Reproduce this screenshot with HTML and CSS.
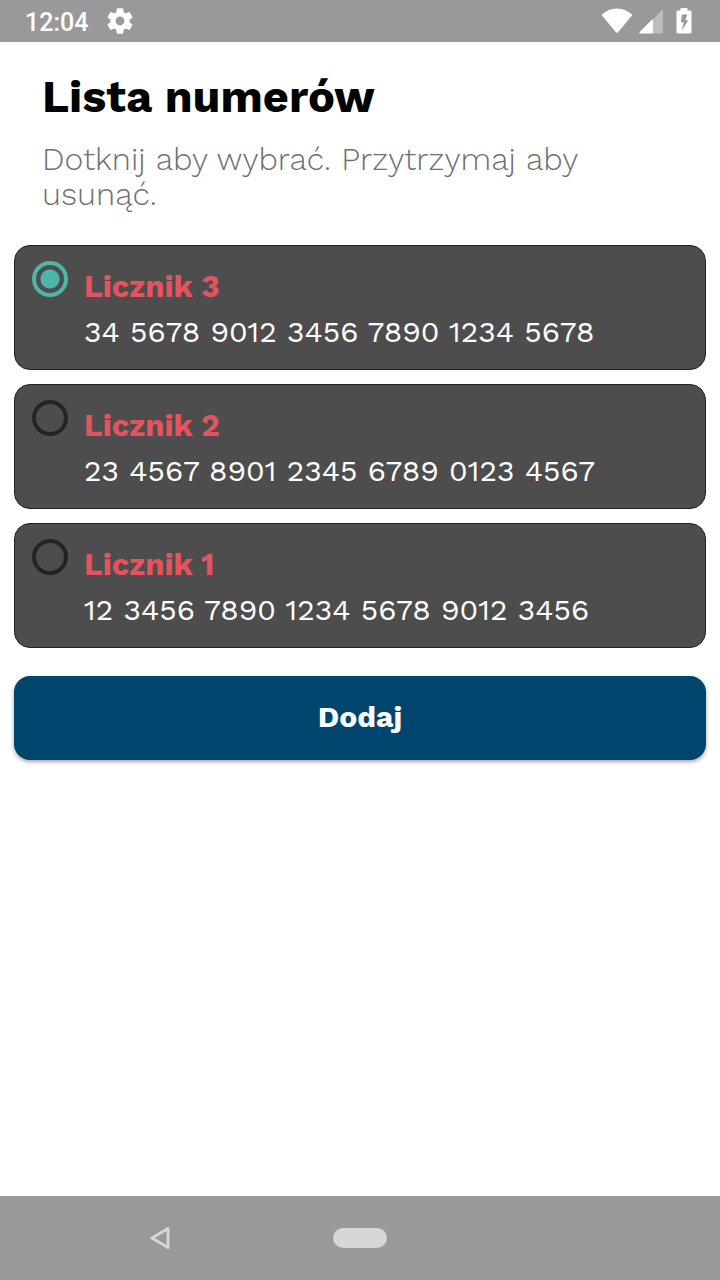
FILE: index.html
```html
<!DOCTYPE html>
<html lang="pl">
<head>
<meta charset="utf-8">
<meta name="viewport" content="width=device-width, initial-scale=1">
<title>Lista numerów</title>
<link rel="stylesheet" href="styles.css">
</head>
<body>
<div class="screen">
  <header class="status">
    <span class="clock">12:04</span>
    <svg class="gear" viewBox="0 0 24 24" aria-hidden="true"><path fill="#fff" d="M19.14 12.94c.04-.3.06-.61.06-.94 0-.32-.02-.64-.07-.94l2.03-1.58c.18-.14.23-.41.12-.61l-1.92-3.32c-.12-.22-.37-.29-.59-.22l-2.39.96c-.5-.38-1.03-.7-1.62-.94l-.36-2.54c-.04-.24-.24-.41-.48-.41h-3.84c-.24 0-.43.17-.47.41l-.36 2.54c-.59.24-1.13.57-1.62.94l-2.39-.96c-.22-.08-.47 0-.59.22L2.74 8.87c-.12.21-.08.47.12.61l2.03 1.58c-.05.3-.09.63-.09.94s.02.64.07.94l-2.03 1.58c-.18.14-.23.41-.12.61l1.92 3.32c.12.22.37.29.59.22l2.39-.96c.5.38 1.03.7 1.62.94l.36 2.54c.05.24.24.41.48.41h3.84c.24 0 .44-.17.47-.41l.36-2.54c.59-.24 1.13-.56 1.62-.94l2.39.96c.22.08.47 0 .59-.22l1.92-3.32c.12-.22.07-.47-.12-.61l-2.01-1.58zM12 15.3c-1.800 0-3.300-1.500-3.300-3.300s1.500-3.300 3.300-3.300 3.300 1.500 3.300 3.300-1.500 3.300-3.300 3.300z"/></svg>
    <div class="indicators">
      <svg class="wifi" viewBox="0 0 32 26" aria-hidden="true"><path fill="#fff" d="M1 6.500Q7.500 .5 16 .5T31 6.500Q31.500 7 31 7.600L16.800 24.600Q16 25.400 15.200 24.600L1 7.600Q.5 7 1 6.500Z"/></svg>
      <svg class="signal" viewBox="0 0 24 26" aria-hidden="true"><path fill="#bdbdbd" d="M14 11.500 22.500 2.500Q24 1.200 24 3V24Q24 25.500 22.500 25.500H14Z"/><path fill="#fff" d="M14 10.800V25.500H1.500Q-.5 25.300.8 23.800Z"/></svg>
      <svg class="battery" viewBox="0 0 16 26" aria-hidden="true"><path fill="#fff" fill-rule="evenodd" d="M4.500 0H11.500V2.500H14Q15.500 2.500 15.500 4V24Q15.500 25.500 14 25.500H2Q.5 25.500.5 24V4Q.5 2.500 2 2.500H4.500ZM6 6.500 4.800 14.200H7.500L6 22.300 12.300 12.200H9.500L11.200 6.500Z"/></svg>
    </div>
  </header>
  <main class="content">
    <div class="intro">
      <h1 class="title">Lista numerów</h1>
      <p class="hint">Dotknij aby wybrać. Przytrzymaj aby usunąć.</p>
    </div>
    <div class="list" role="radiogroup" aria-label="Lista numerów">
      <label class="card" for="n3">
        <input class="radio" type="radio" name="numer" id="n3" checked>
        <span class="text"><span class="name">Licznik 3</span><span class="number">34 5678 9012 3456 7890 1234 5678</span></span>
      </label>
      <label class="card" for="n2">
        <input class="radio" type="radio" name="numer" id="n2">
        <span class="text"><span class="name">Licznik 2</span><span class="number">23 4567 8901 2345 6789 0123 4567</span></span>
      </label>
      <label class="card" for="n1">
        <input class="radio" type="radio" name="numer" id="n1">
        <span class="text"><span class="name">Licznik 1</span><span class="number">12 3456 7890 1234 5678 9012 3456</span></span>
      </label>
    </div>
    <button class="add" type="button">Dodaj</button>
  </main>
  <nav class="navbar" aria-label="System">
    <button class="nav-button" type="button" aria-label="Wstecz"><svg class="back" viewBox="0 0 20 24" aria-hidden="true"><path fill="none" stroke="#d6d6d6" stroke-width="3" stroke-linejoin="round" d="M18 2.500V21.500L2 12Z"/></svg></button>
    <button class="nav-button" type="button" aria-label="Ekran główny"><span class="pill"></span></button>
    <span></span>
  </nav>
</div>
</body>
</html>
```
FILE: styles.css
```css
* {
  box-sizing: border-box;
}

body {
  margin: 0;
  background: #fff;
  font-family: "Work Sans", Inter, "Liberation Sans", sans-serif;
}

.screen {
  display: flex;
  flex-direction: column;
  min-height: 100vh;
}

.status {
  display: flex;
  align-items: center;
  height: 42px;
  padding: 0 28px 0 25px;
  background: #999;
  color: #fff;
}

.clock {
  padding-top: 3px;
  font-family: Roboto, sans-serif;
  font-size: 25px;
  font-weight: 500;
  line-height: 39px;
}

.gear {
  width: 32px;
  height: 32px;
  margin-left: 16px;
}

.indicators {
  display: flex;
  gap: 6px;
  margin-left: auto;
}

.wifi {
  width: 32px;
  height: 26px;
}

.signal {
  width: 24px;
  height: 26px;
}

.battery {
  width: 16px;
  height: 26px;
  margin-left: 7px;
}

.content {
  flex: 1;
  padding: 28px 14px;
}

.intro {
  padding: 0 28px;
}

.title {
  margin: 0;
  color: #000;
  font-size: 45px;
  font-weight: 700;
  line-height: 54px;
}

.hint {
  margin: 18px 0 33px;
  color: #707070;
  font-size: 32px;
  font-weight: 300;
  line-height: 35px;
}

.list {
  display: grid;
  gap: 14px;
}

.card {
  display: flex;
  align-items: flex-start;
  gap: 16px;
  padding: 15px 17px;
  border: 1px solid #222;
  border-radius: 16px;
  background: #4d4d4d;
}

.radio {
  flex: none;
  width: 36px;
  height: 36px;
  margin: 0;
  border: 4px solid #242424;
  border-radius: 50%;
  appearance: none;
}

.radio:checked {
  border-color: #4db6a9;
  background: radial-gradient(circle, #4db6a9 9px, transparent 10px);
}

.text {
  display: flex;
  flex-direction: column;
  padding-top: 4px;
}

.name {
  color: #e5535f;
  font-size: 31px;
  font-weight: 700;
  line-height: 44px;
}

.number {
  color: #fff;
  font-size: 30px;
  line-height: 45px;
}

.add {
  display: block;
  width: 100%;
  margin-top: 28px;
  padding: 19px 20px 21px;
  border: 0;
  border-radius: 16px;
  background: #00456e;
  box-shadow: 0 2px 4px rgba(0, 0, 0, 0.35);
  color: #fff;
  font-family: inherit;
  font-size: 30px;
  font-weight: 700;
  line-height: 44px;
}

.navbar {
  display: grid;
  grid-template-columns: 2fr 1fr 2fr;
  align-items: center;
  height: 84px;
  padding: 0 27px;
  background: #999;
}

.nav-button {
  display: flex;
  justify-content: center;
  padding: 12px 0;
  border: 0;
  background: none;
}

.back {
  width: 20px;
  height: 24px;
}

.pill {
  width: 54px;
  height: 20px;
  border-radius: 10px;
  background: #d6d6d6;
}
```
